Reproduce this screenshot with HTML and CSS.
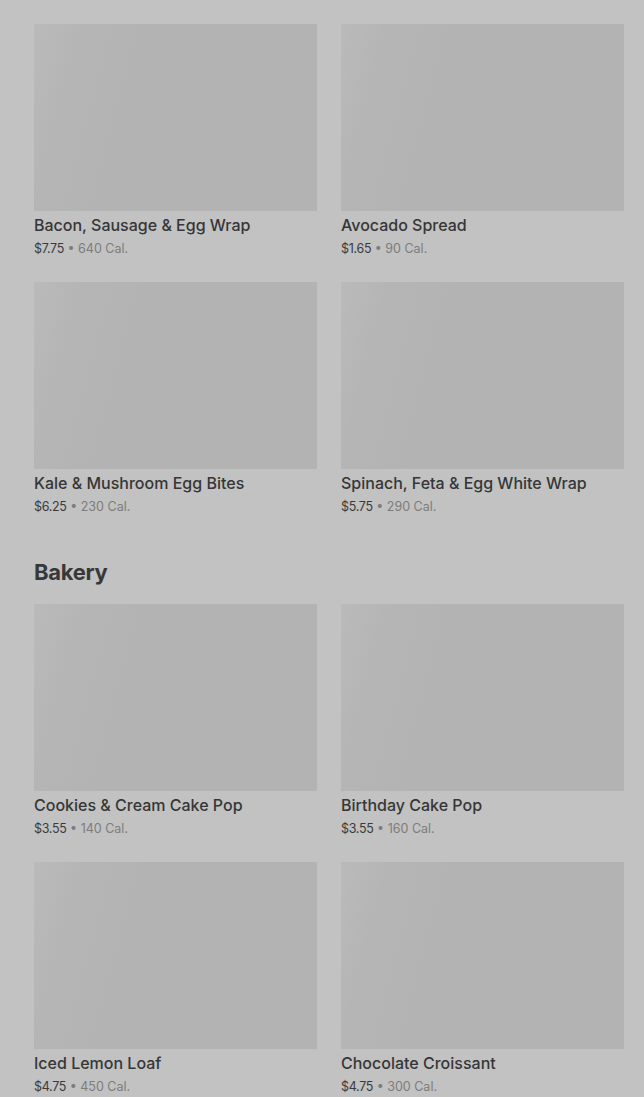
FILE: index.html
```html
<!DOCTYPE html>
<html>
<head>
<meta charset="utf-8">
<link rel="stylesheet" href="styles.css">
</head>
<body>
<main class="menu">
  <section class="section">
    <div class="grid">
      <div class="card">
        <div class="thumb"></div>
        <div class="name">Bacon, Sausage &amp; Egg Wrap</div>
        <div class="meta"><span class="price">$7.75</span> <span class="cal">• 640 Cal.</span></div>
      </div>
      <div class="card">
        <div class="thumb"></div>
        <div class="name">Avocado Spread</div>
        <div class="meta"><span class="price">$1.65</span> <span class="cal">• 90 Cal.</span></div>
      </div>
      <div class="card">
        <div class="thumb"></div>
        <div class="name">Kale &amp; Mushroom Egg Bites</div>
        <div class="meta"><span class="price">$6.25</span> <span class="cal">• 230 Cal.</span></div>
      </div>
      <div class="card">
        <div class="thumb"></div>
        <div class="name">Spinach, Feta &amp; Egg White Wrap</div>
        <div class="meta"><span class="price">$5.75</span> <span class="cal">• 290 Cal.</span></div>
      </div>
    </div>
  </section>
  <section class="section">
    <h2 class="heading">Bakery</h2>
    <div class="grid">
      <div class="card">
        <div class="thumb"></div>
        <div class="name">Cookies &amp; Cream Cake Pop</div>
        <div class="meta"><span class="price">$3.55</span> <span class="cal">• 140 Cal.</span></div>
      </div>
      <div class="card">
        <div class="thumb"></div>
        <div class="name">Birthday Cake Pop</div>
        <div class="meta"><span class="price">$3.55</span> <span class="cal">• 160 Cal.</span></div>
      </div>
      <div class="card">
        <div class="thumb"></div>
        <div class="name">Iced Lemon Loaf</div>
        <div class="meta"><span class="price">$4.75</span> <span class="cal">• 450 Cal.</span></div>
      </div>
      <div class="card">
        <div class="thumb"></div>
        <div class="name">Chocolate Croissant</div>
        <div class="meta"><span class="price">$4.75</span> <span class="cal">• 300 Cal.</span></div>
      </div>
    </div>
  </section>
</main>
</body>
</html>
```

FILE: styles.css
```css
html, body {
  margin: 0;
  padding: 0;
  background: #c2c2c2;
}

body {
  font-family: Inter, "Liberation Sans", sans-serif;
  color: #333333;
  overflow: hidden;
}

.menu {
  padding: 24px 20px 0 34px;
}

.section + .section {
  margin-top: 40px;
}

.heading {
  margin: 0 0 16px 0;
  font-size: 22px;
  line-height: 32px;
  font-weight: 700;
  letter-spacing: -0.3px;
  color: #383838;
}

.grid {
  display: grid;
  grid-template-columns: 1fr 1fr;
  column-gap: 24px;
  row-gap: 24px;
}

.card {
  display: flex;
  flex-direction: column;
}

.thumb {
  height: 187px;
  background: linear-gradient(105deg, #bababa 0%, #b5b5b5 15%, #b3b3b3 35%, #b3b3b3 100%);
}

.name {
  margin-top: 3px;
  font-size: 16px;
  line-height: 22px;
  font-weight: 500;
  color: #363636;
  white-space: nowrap;
}

.meta {
  margin-top: 3px;
  font-size: 12.5px;
  line-height: 19px;
  white-space: nowrap;
}

.price {
  color: #3a3a3a;
  letter-spacing: -0.3px;
}

.cal {
  color: #7c7c7c;
}
```
